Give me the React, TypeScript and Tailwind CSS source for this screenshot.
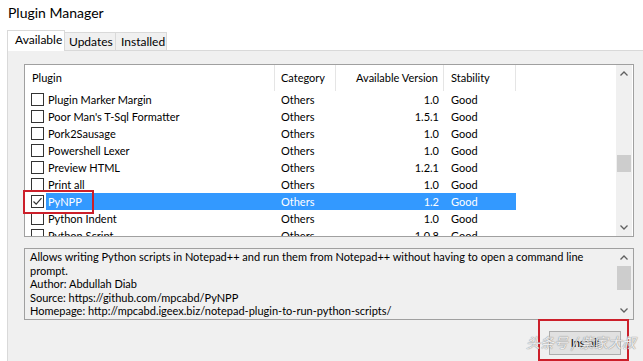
import React from "react";

type Plugin = {
  name: string;
  category: string;
  version: string;
  stability: string;
  checked?: boolean;
  selected?: boolean;
};

const plugins: Plugin[] = [
  { name: "Plugin Marker Margin", category: "Others", version: "1.0", stability: "Good" },
  { name: "Poor Man's T-Sql Formatter", category: "Others", version: "1.5.1", stability: "Good" },
  { name: "Pork2Sausage", category: "Others", version: "1.0", stability: "Good" },
  { name: "Powershell Lexer", category: "Others", version: "1.0", stability: "Good" },
  { name: "Preview HTML", category: "Others", version: "1.2.1", stability: "Good" },
  { name: "Print all", category: "Others", version: "1.0", stability: "Good" },
  { name: "PyNPP", category: "Others", version: "1.2", stability: "Good", checked: true, selected: true },
  { name: "Python Indent", category: "Others", version: "1.0", stability: "Good" },
  { name: "Python Script", category: "Others", version: "1.0.8", stability: "Good" },
];

function Chevron({ up }: { up?: boolean }) {
  return (
    <svg width="8" height="5" viewBox="0 0 8 5" className="block">
      <polyline
        points={up ? "0.5,4.5 4,1 7.5,4.5" : "0.5,0.5 4,4 7.5,0.5"}
        fill="none"
        stroke="#606060"
        strokeWidth="1.3"
      />
    </svg>
  );
}

function Checkbox({ checked }: { checked?: boolean }) {
  return (
    <div className="w-[13px] h-[13px] border border-[#333] bg-white flex items-center justify-center">
      {checked && (
        <svg width="11" height="11" viewBox="0 0 11 11">
          <polyline points="1.5,5.5 4.2,8.2 9.5,2.2" fill="none" stroke="#333" strokeWidth="1.2" />
        </svg>
      )}
    </div>
  );
}

export default function App() {
  return (
    <div className="relative w-[643px] h-[361px] overflow-hidden bg-white text-black text-[11px] font-['Lato',sans-serif]">
      <div className="h-[28px] pl-[8px] pt-[3px] text-[14px] leading-[20px]">Plugin Manager</div>

      {/* tabs */}
      <div className="flex items-end h-[22px] pl-[7px] relative z-10">
        <div className="h-[21px] -mb-px w-[58px] bg-white border border-b-0 border-[#d9d9d9] pl-[7px] leading-[17px] text-[12px]">
          Available
        </div>
        <div className="h-[18px] w-[51px] bg-[#f0f0f0] border border-l-0 border-b-0 border-[#d9d9d9] pl-[4px] pt-px leading-[16px] text-[12px]">
          Updates
        </div>
        <div className="h-[18px] w-[51px] bg-[#f0f0f0] border border-l-0 border-b-0 border-[#d9d9d9] pl-[5px] pt-px leading-[16px] text-[12px]">
          Installed
        </div>
      </div>

      {/* tab page */}
      <div className="ml-[7px] w-[700px] h-[320px] border border-[#d9d9d9] bg-[#f0f0f0] pl-[16px] pt-[13px]">
        {/* plugin list */}
        <div className="w-[610px] h-[173px] border border-[#a0a0a0] bg-white flex">
          <div className="flex-1 overflow-hidden">
            <div className="flex h-[26px] items-center">
              <div className="w-[250px] h-full pl-[7px] flex items-center border-r border-[#e5e5e5]">Plugin</div>
              <div className="w-[61px] h-full pl-[6px] flex items-center border-r border-[#e5e5e5]">Category</div>
              <div className="w-[108px] h-full pr-[5px] flex items-center justify-end border-r border-[#e5e5e5]">
                Available Version
              </div>
              <div className="w-[72px] h-full pl-[7px] flex items-center border-r border-[#e5e5e5]">Stability</div>
            </div>
            {plugins.map((p) => (
              <div key={p.name} className="flex h-[17px] items-center">
                <div className="w-[21px] pl-[6px] flex items-center">
                  <Checkbox checked={p.checked} />
                </div>
                <div
                  className={`flex h-full items-center leading-[16px] ${
                    p.selected ? "bg-[#3399ff] text-white" : ""
                  }`}
                >
                  <div className="w-[229px] pl-[2px] whitespace-nowrap">{p.name}</div>
                  <div className="w-[61px] pl-[6px]">{p.category}</div>
                  <div className="w-[108px] pr-[5px] text-right">{p.version}</div>
                  <div className="w-[72px] pl-[7px]">{p.stability}</div>
                </div>
              </div>
            ))}
          </div>
          <div className="w-[17px] pr-px">
            <div className="h-full bg-[#f0f0f0] flex flex-col items-center">
              <div className="h-[17px] flex items-center justify-center">
                <Chevron up />
              </div>
              <div className="flex-1 w-full px-px pt-[73px]">
                <div className="h-[17px] bg-[#cdcdcd]" />
              </div>
              <div className="h-[17px] flex items-center justify-center">
                <Chevron />
              </div>
            </div>
          </div>
        </div>

        {/* description */}
        <div className="mt-[11px] w-[610px] h-[72px] border border-[#a0a0a0] bg-[#f0f0f0] flex">
          <div className="flex-1 pl-[5px] pt-px leading-[13.5px] whitespace-nowrap">
            <div>Allows writing Python scripts in Notepad++ and run them from Notepad++ without having to open a command line</div>
            <div>prompt.</div>
            <div>Author: Abdullah Diab</div>
            <div>Source: https://github.com/mpcabd/PyNPP</div>
            <div>Homepage: http://mpcabd.igeex.biz/notepad-plugin-to-run-python-scripts/</div>
          </div>
          <div className="w-[17px] pr-px">
            <div className="h-full flex flex-col items-center">
              <div className="h-[17px] flex items-center justify-center">
                <Chevron up />
              </div>
              <div className="w-full px-px">
                <div className="h-[24px] bg-[#cdcdcd]" />
              </div>
              <div className="flex-1" />
              <div className="h-[17px] flex items-center justify-center">
                <Chevron />
              </div>
            </div>
          </div>
        </div>

        <div className="w-[610px] flex justify-end pr-[13px] mt-[11px]">
          <div className="w-[72px] h-[24px] bg-[#e1e1e1] border border-[#adadad] flex items-center justify-center">
            Install
          </div>
        </div>
      </div>

      {/* red annotation boxes */}
      <div className="absolute left-[23px] top-[190px] w-[71px] h-[24px] border-2 border-[#cc1f2a]" />
      <div className="absolute left-[538px] top-[319px] w-[91px] h-[42px] border-2 border-[#cc1f2a]" />

      {/* watermark */}
      <div className="absolute left-[526px] top-[332px] text-[14px] italic text-white/85 whitespace-nowrap font-['Noto_Sans_CJK_SC',sans-serif] [text-shadow:0_0_1px_#888,0_0_1px_#888]">
        头条号 / 紫家大叔
      </div>
    </div>
  );
}
